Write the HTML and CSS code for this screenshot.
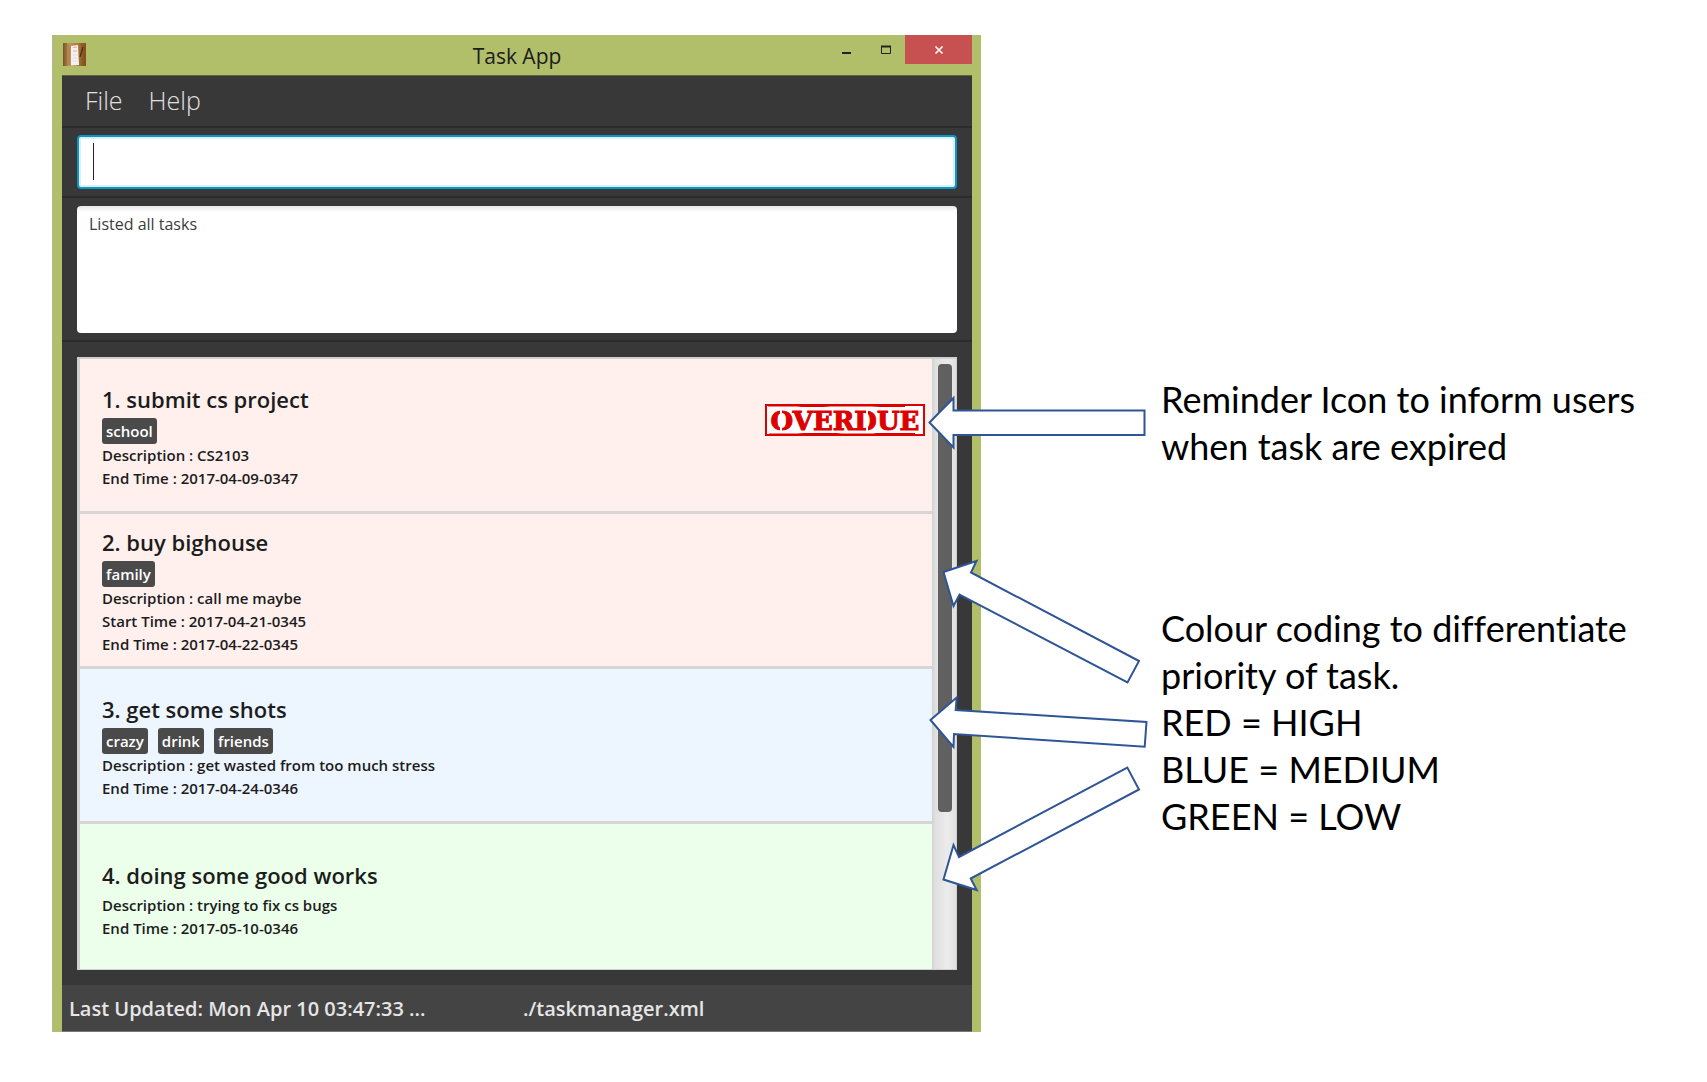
FILE: index.html
```html
<!DOCTYPE html>
<html lang="en">
<head>
<meta charset="utf-8">
<meta name="viewport" content="width=device-width, initial-scale=1">
<title>Task App</title>
<link rel="stylesheet" href="styles.css">
</head>
<body>
<main class="stage">
  <section class="window" aria-label="Task App">
    <header class="titlebar">
      <svg class="app-icon" viewBox="0 0 23 23" aria-hidden="true">
        <defs>
          <linearGradient id="wood" x1="0" x2="1" y1="0" y2="0">
            <stop offset="0" stop-color="#7a4e22"/>
            <stop offset=".25" stop-color="#c4955a"/>
            <stop offset=".6" stop-color="#b07a3e"/>
            <stop offset="1" stop-color="#80501f"/>
          </linearGradient>
        </defs>
        <rect width="23" height="23" fill="url(#wood)"/>
        <path d="M3 0v23M6 2v20M19 0v23M21 3v20" stroke="#5f3a16" stroke-opacity=".25"/>
        <path d="M8 3l7-1 1 20-8 .5z" fill="#f4f1f0"/>
        <path d="M10 4.500l4-.5M10 8h4" stroke="#e9a5a8"/>
        <path d="M9.500 12h5M9.500 15h5M9.500 18h5" stroke="#dfdce0"/>
        <path d="M20 4l-3 10" stroke="#4a3018" stroke-width="1.300"/>
      </svg>
      <h1 class="app-title">Task App</h1>
      <div class="window-controls">
        <button class="control" type="button" aria-label="Minimize"><svg width="12" height="12" viewBox="0 0 12 12"><path d="M1 9h9" stroke="#222" stroke-width="2"/></svg></button>
        <button class="control" type="button" aria-label="Maximize"><svg width="12" height="12" viewBox="0 0 12 12"><path d="M1.500 2.500h9v7h-9z" fill="none" stroke="#222"/><path d="M1 2.500h10" stroke="#222" stroke-width="2"/></svg></button>
        <button class="control close" type="button" aria-label="Close"><svg width="12" height="12" viewBox="0 0 12 12"><path d="M2.500 2.500l7 7M9.500 2.500l-7 7" stroke="#fff" stroke-width="1.600"/></svg></button>
      </div>
    </header>
    <div class="client">
      <nav class="menubar" aria-label="Main menu">
        <button class="menu" type="button">File</button>
        <button class="menu" type="button">Help</button>
      </nav>
      <div class="pane command-pane">
        <input class="command" type="text" aria-label="Command">
      </div>
      <div class="pane result-pane">
        <textarea class="result" readonly aria-label="Result">Listed all tasks</textarea>
      </div>
      <div class="pane list-pane">
        <div class="task-list">
          <ol class="tasks">
            <li class="task high">
              <div class="details">
                <h2 class="name">1. submit cs project</h2>
                <div class="tags"><span class="tag">school</span></div>
                <p class="field">Description : CS2103</p>
                <p class="field">End Time : 2017-04-09-0347</p>
              </div>
              <svg class="stamp" viewBox="0 0 160 32" role="img" aria-label="Overdue">
                <rect x="1" y="1" width="158" height="30" fill="#fff" stroke="#dc0000" stroke-width="2"/>
                <path d="M3 2h29l5 .5h22l6-.5h42l8 .5h25M4 30h28l7-.5h32l6 .5h31l4-.5h38" fill="none" stroke="#dc0000"/>
                <text class="stamp-text" x="80" y="26" text-anchor="middle">OVERDUE</text>
                <path d="M16 4v24M102 4v24" stroke="#fff" stroke-width="2"/>
              </svg>
            </li>
            <li class="task high">
              <div class="details">
                <h2 class="name">2. buy bighouse</h2>
                <div class="tags"><span class="tag">family</span></div>
                <p class="field">Description : call me maybe</p>
                <p class="field">Start Time : 2017-04-21-0345</p>
                <p class="field">End Time : 2017-04-22-0345</p>
              </div>
            </li>
            <li class="task medium">
              <div class="details">
                <h2 class="name">3. get some shots</h2>
                <div class="tags"><span class="tag">crazy</span><span class="tag">drink</span><span class="tag">friends</span></div>
                <p class="field">Description : get wasted from too much stress</p>
                <p class="field">End Time : 2017-04-24-0346</p>
              </div>
            </li>
            <li class="task low">
              <div class="details">
                <h2 class="name">4. doing some good works</h2>
                <p class="field">Description : trying to fix cs bugs</p>
                <p class="field">End Time : 2017-05-10-0346</p>
              </div>
            </li>
          </ol>
          <div class="scrollbar"><div class="thumb"></div></div>
        </div>
      </div>
      <footer class="statusbar">
        <span class="status">Last Updated: Mon Apr 10 03:47:33 ...</span>
        <span class="status">./taskmanager.xml</span>
      </footer>
    </div>
  </section>
  <svg class="arrows" viewBox="920 390 230 510" aria-hidden="true">
    <g fill="#fff" stroke="#2f5597" stroke-width="2">
      <path d="M929.500 422.500L953.500 398v12.500h191v24.500h-191v12.500z"/>
      <path d="M943.500 572l33-11-5.500 11.500 168 88.500-11.500 21.500-168-88-6 11.500z"/>
      <path d="M930.500 720l26.200-22.500-1 12.500 190.800 12-1.800 24.800L954 734l-.5 13z"/>
      <path d="M943.500 879.500l10-34.500 5.500 12 168.300-89.500 11.700 22-168.300 89 6 11.500z"/>
    </g>
  </svg>
  <aside class="notes">
    <p class="note">Reminder Icon to inform users<br>when task are expired</p>
    <p class="note">Colour coding to differentiate<br>priority of task.<br>RED = HIGH<br>BLUE = MEDIUM<br>GREEN = LOW</p>
  </aside>
</main>
</body>
</html>
```
FILE: styles.css
```css
* {
  box-sizing: border-box;
}

body {
  margin: 0;
  background: #fff;
  color: #1c1c1c;
  font-family: "Open Sans", "Noto Sans", sans-serif;
}

h1,
h2,
p,
ol {
  margin: 0;
  padding: 0;
}

button,
input,
textarea {
  font: inherit;
}

.stage {
  display: flex;
  align-items: flex-start;
  padding: 35px 52px 50px;
}

/* Application window */

.window {
  flex: 1;
  min-width: 700px;
  padding: 0 9px;
  border-left: 1px solid #b4b59c;
  background: #b1bf6a;
}

.titlebar {
  display: grid;
  grid-template-columns: 1fr auto 1fr;
  height: 40px;
}

.app-icon {
  width: 23px;
  height: 23px;
  margin: 8px 1px;
}

.app-title {
  font-size: 21px;
  font-weight: 400;
  line-height: 42px;
}

.window-controls {
  display: flex;
  justify-content: flex-end;
}

.control {
  display: flex;
  align-items: center;
  justify-content: center;
  width: 39px;
  height: 29px;
  padding: 0;
  border: 0;
  background: none;
}

.close {
  width: 67px;
  background: #c75050;
}

.client {
  border-top: 1px solid #5e6340;
  background: #383838;
}

.menubar {
  display: flex;
  align-items: flex-start;
  gap: 26px;
  height: 50px;
  padding: 0 23px;
}

.menu {
  padding: 0;
  border: 0;
  background: none;
  color: #e0e0e0;
  font-size: 25px;
  font-weight: 300;
  line-height: 48px;
}

.pane {
  padding: 7px 15px;
  border-top: 2px solid #2c2c2c;
}

.command-pane {
  position: relative;
  height: 70px;
}

.command-pane::after {
  content: "";
  position: absolute;
  top: 15px;
  left: 31px;
  width: 1px;
  height: 37px;
  background: #222;
}

.command {
  display: block;
  width: 100%;
  height: 54px;
  padding: 0 14px;
  border: 2px solid #0f94c4;
  border-radius: 4px;
  outline: none;
  background: #fff;
  box-shadow: inset 0 0 0 2px #d6f1fa;
  font-size: 25px;
}

.result-pane {
  height: 144px;
  padding-top: 8px;
}

.result {
  display: block;
  width: 100%;
  height: 127px;
  padding: 7px 12px;
  border: 0;
  border-radius: 4px;
  outline: none;
  background: linear-gradient(#e8e8e8, #fff 6px);
  color: #3c3c3c;
  font-size: 16px;
  line-height: 22px;
  resize: none;
}

.list-pane {
  padding: 15px;
}

.task-list {
  display: flex;
  border: 2px solid #d0d0d0;
  border-width: 2px 1px 1px 3px;
}

.tasks {
  flex: 1;
  list-style: none;
}

.task {
  display: flex;
  align-items: center;
  justify-content: space-between;
  height: 155px;
  padding: 0 7px 1px 22px;
  border-bottom: 3px solid #d6d6d6;
}

.task:last-child {
  height: 145px;
  padding-top: 4px;
  border-bottom: 0;
}

.high {
  background: #fff0ed;
}

.medium {
  background: #edf5ff;
}

.low {
  background: #ebffeb;
}

.name {
  font-size: 22px;
  font-weight: 600;
  line-height: 38px;
}

.tags {
  display: flex;
  gap: 10px;
}

.tag {
  padding: 0 4px;
  border-radius: 3px;
  background: #4a4a4a;
  color: #fff;
  font-size: 15px;
  font-weight: 600;
  line-height: 26px;
}

.field {
  font-size: 15px;
  font-weight: 600;
  line-height: 23px;
}

.stamp {
  width: 160px;
  height: 32px;
  margin-bottom: 30px;
}

.stamp-text {
  fill: #dc0000;
  stroke: #dc0000;
  stroke-width: 1px;
  font-family: "DejaVu Serif", serif;
  font-size: 26px;
  font-weight: 700;
}

.scrollbar {
  width: 24px;
  padding: 5px 4px 0;
  border-left: 2px solid #d6d6d6;
  background: linear-gradient(90deg, #dedede, #ececec 60%, #e0e0e0);
}

.thumb {
  height: 74%;
  border-radius: 4px;
  background: #606060;
}

.statusbar {
  display: grid;
  grid-template-columns: 1fr 1fr;
  gap: 12px;
  height: 47px;
  padding: 0 7px;
  border-bottom: 1px solid #777;
  background: #444;
}

.status {
  color: #e6e6e6;
  font-size: 20px;
  font-weight: 600;
  line-height: 48px;
}

/* Callouts beside the window */

.arrows {
  position: relative;
  flex: none;
  width: 230px;
  height: 510px;
  margin: 355px 0 0 -61px;
}

.notes {
  flex: none;
  display: grid;
  gap: 135px;
  width: 494px;
  margin-left: 11px;
  padding-top: 341px;
  color: #000;
  font-family: Lato, sans-serif;
  font-size: 36px;
  font-variant-ligatures: none;
  line-height: 47px;
}

.note {
  white-space: nowrap;
}
```
